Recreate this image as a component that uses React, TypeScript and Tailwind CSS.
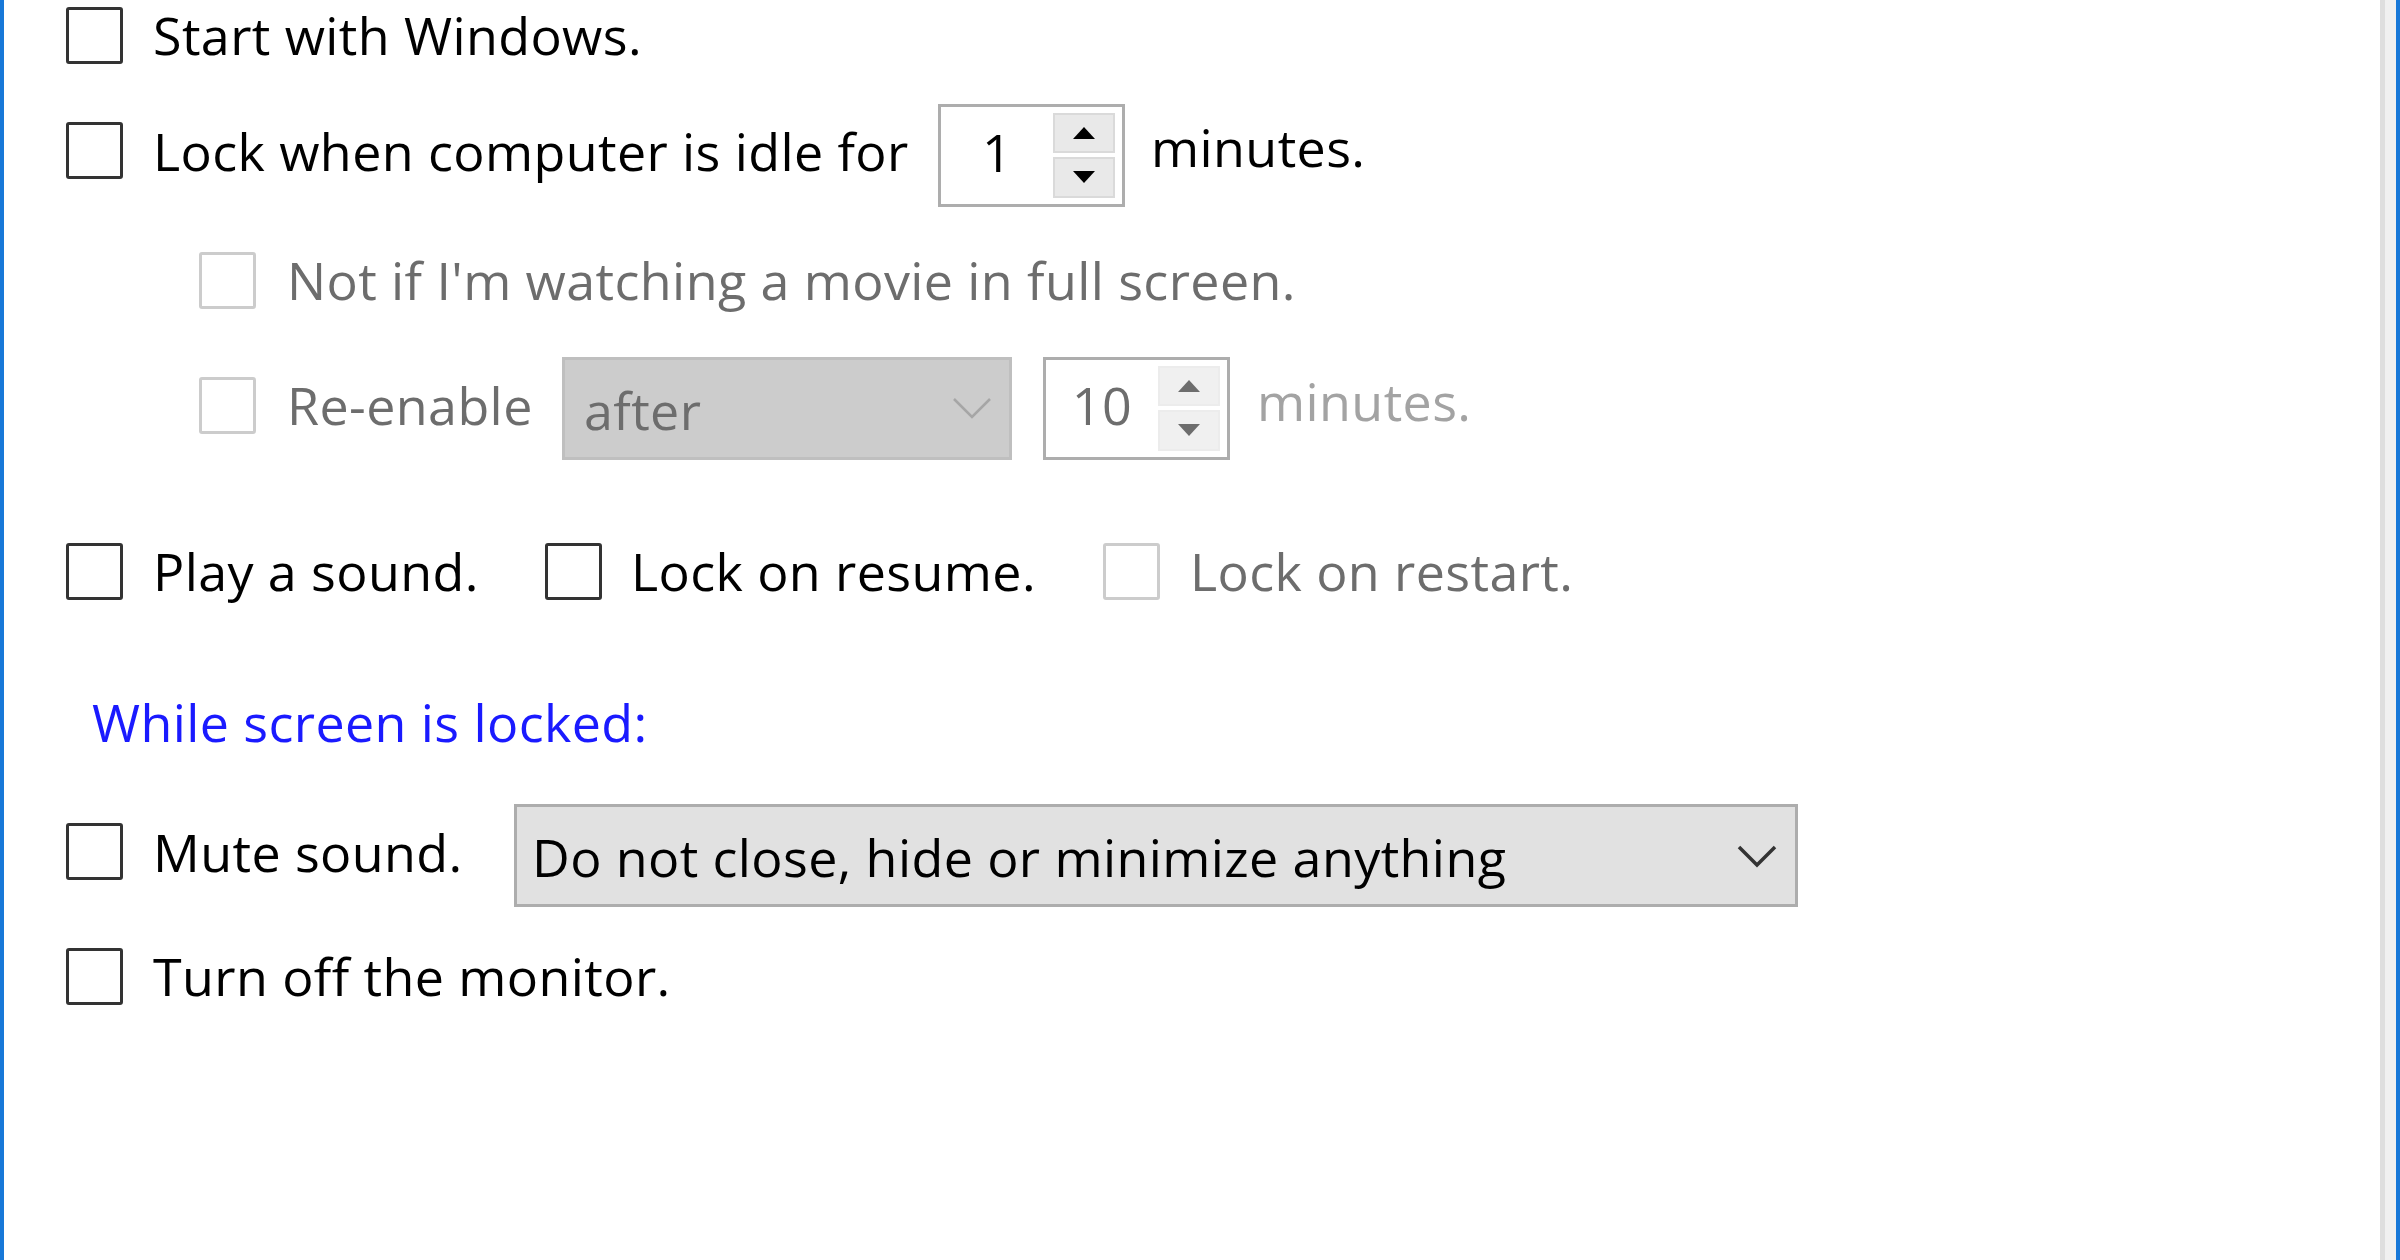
import React from 'react'

function Check({ disabled = false, className = '' }: { disabled?: boolean; className?: string }) {
  return (
    <div
      className={`h-[57px] w-[57px] shrink-0 rounded-[3px] border-[3px] bg-white ${
        disabled ? 'border-[#cccccc]' : 'border-[#333333]'
      } ${className}`}
    />
  )
}

function Arrow({ up, color }: { up: boolean; color: string }) {
  return (
    <svg width="22" height="12" viewBox="0 0 22 12">
      <polygon points={up ? '11,0 22,12 0,12' : '0,0 22,0 11,12'} fill={color} />
    </svg>
  )
}

function Spinner({ value, disabled = false, className = '' }: { value: string; disabled?: boolean; className?: string }) {
  const arrow = disabled ? '#6d6d6d' : '#000000'
  return (
    <div className={`flex h-[103px] w-[187px] shrink-0 border-[3px] border-[#adadad] bg-white py-[6px] pr-[7px] ${className}`}>
      <div className={`flex flex-1 items-center justify-center pb-[6px] ${disabled ? 'text-[#6d6d6d]' : 'text-black'}`}>
        {value}
      </div>
      <div className="flex w-[62px] flex-col gap-[4px]">
        <div
          className={`flex flex-1 items-center justify-center border-[2px] ${
            disabled ? 'border-[#ececec] bg-[#f0f0f0]' : 'border-[#dadada] bg-[#e9e9e9]'
          }`}
        >
          <Arrow up color={arrow} />
        </div>
        <div
          className={`flex flex-1 items-center justify-center border-[2px] ${
            disabled ? 'border-[#ececec] bg-[#f0f0f0]' : 'border-[#dadada] bg-[#e9e9e9]'
          }`}
        >
          <Arrow up={false} color={arrow} />
        </div>
      </div>
    </div>
  )
}

function Chevron({ color, width }: { color: string; width: number }) {
  return (
    <svg width="40" height="24" viewBox="0 0 40 24" className="shrink-0">
      <polyline points="2,3 20,21 38,3" fill="none" stroke={color} strokeWidth={width} />
    </svg>
  )
}

export default function App() {
  return (
    <div className="flex h-[1260px] w-[2400px] overflow-hidden bg-white font-['Open_Sans',sans-serif] text-[52px] leading-none tracking-[0.4px] text-black">
      {/* window frame, left */}
      <div className="w-[4px] shrink-0 bg-[#1878d8]" />

      <main className="flex flex-1 flex-col pl-[62px]">
        {/* Start with Windows */}
        <div className="flex h-[70px] items-center">
          <Check />
          <span className="ml-[30px] whitespace-nowrap">Start with Windows.</span>
        </div>

        {/* Idle lock */}
        <div className="mt-[30px] flex h-[110px] items-center">
          <Check className="mb-[9px]" />
          <span className="mb-[9px] ml-[30px] w-[750px] whitespace-nowrap">Lock when computer is idle for</span>
          <Spinner value="1" className="ml-[35px]" />
          <span className="mb-[16px] ml-[26px] whitespace-nowrap">minutes.</span>
        </div>

        {/* Nested, disabled */}
        <div className="mt-[35px] flex h-[70px] items-center pl-[133px] text-[#6d6d6d]">
          <Check disabled />
          <span className="ml-[31px] whitespace-nowrap">Not if I'm watching a movie in full screen.</span>
        </div>

        <div className="mt-[41px] flex h-[104px] items-center pl-[133px] text-[#6d6d6d]">
          <Check disabled className="mb-[6px]" />
          <span className="mb-[6px] ml-[31px] w-[243px] whitespace-nowrap">Re-enable</span>
          <div className="ml-[32px] flex h-[103px] w-[450px] shrink-0 items-center justify-between border-[3px] border-[#bfbfbf] bg-[#cccccc] pl-[19px] pr-[17px]">
            <span className="mt-[4px]">after</span>
            <Chevron color="#a6a6a6" width={2.5} />
          </div>
          <Spinner value="10" disabled className="ml-[31px]" />
          <span className="mb-[14px] ml-[27px] whitespace-nowrap text-[#a3a3a3]">minutes.</span>
        </div>

        {/* Sound / resume / restart */}
        <div className="mt-[76px] flex h-[70px] items-center">
          <Check />
          <span className="ml-[30px] w-[321px] whitespace-nowrap">Play a sound.</span>
          <Check className="ml-[71px]" />
          <span className="ml-[29px] w-[401px] whitespace-nowrap">Lock on resume.</span>
          <Check disabled className="ml-[71px]" />
          <span className="ml-[30px] whitespace-nowrap text-[#6d6d6d]">Lock on restart.</span>
        </div>

        <div className="mt-[81px] flex h-[70px] items-center pl-[26px]">
          <span className="whitespace-nowrap text-[#1a1aff]">While screen is locked:</span>
        </div>

        {/* Mute */}
        <div className="mt-[47px] flex h-[103px] items-center">
          <Check className="mb-[8px]" />
          <span className="mb-[8px] ml-[30px] w-[308px] whitespace-nowrap">Mute sound.</span>
          <div className="ml-[53px] flex h-[103px] w-[1284px] shrink-0 items-center justify-between border-[3px] border-[#adadad] bg-[#e1e1e1] pl-[15px] pr-[18px]">
            <span className="mt-[2px] whitespace-nowrap">Do not close, hide or minimize anything</span>
            <Chevron color="#333333" width={3.5} />
          </div>
        </div>

        <div className="mt-[34px] flex h-[70px] items-center">
          <Check />
          <span className="ml-[30px] whitespace-nowrap">Turn off the monitor.</span>
        </div>
      </main>

      {/* window frame, right */}
      <div className="w-[5px] shrink-0 bg-[#dedede]" />
      <div className="w-[11px] shrink-0 bg-[#f0f0f0]" />
      <div className="w-[4px] shrink-0 bg-[#1878d8]" />
    </div>
  )
}
